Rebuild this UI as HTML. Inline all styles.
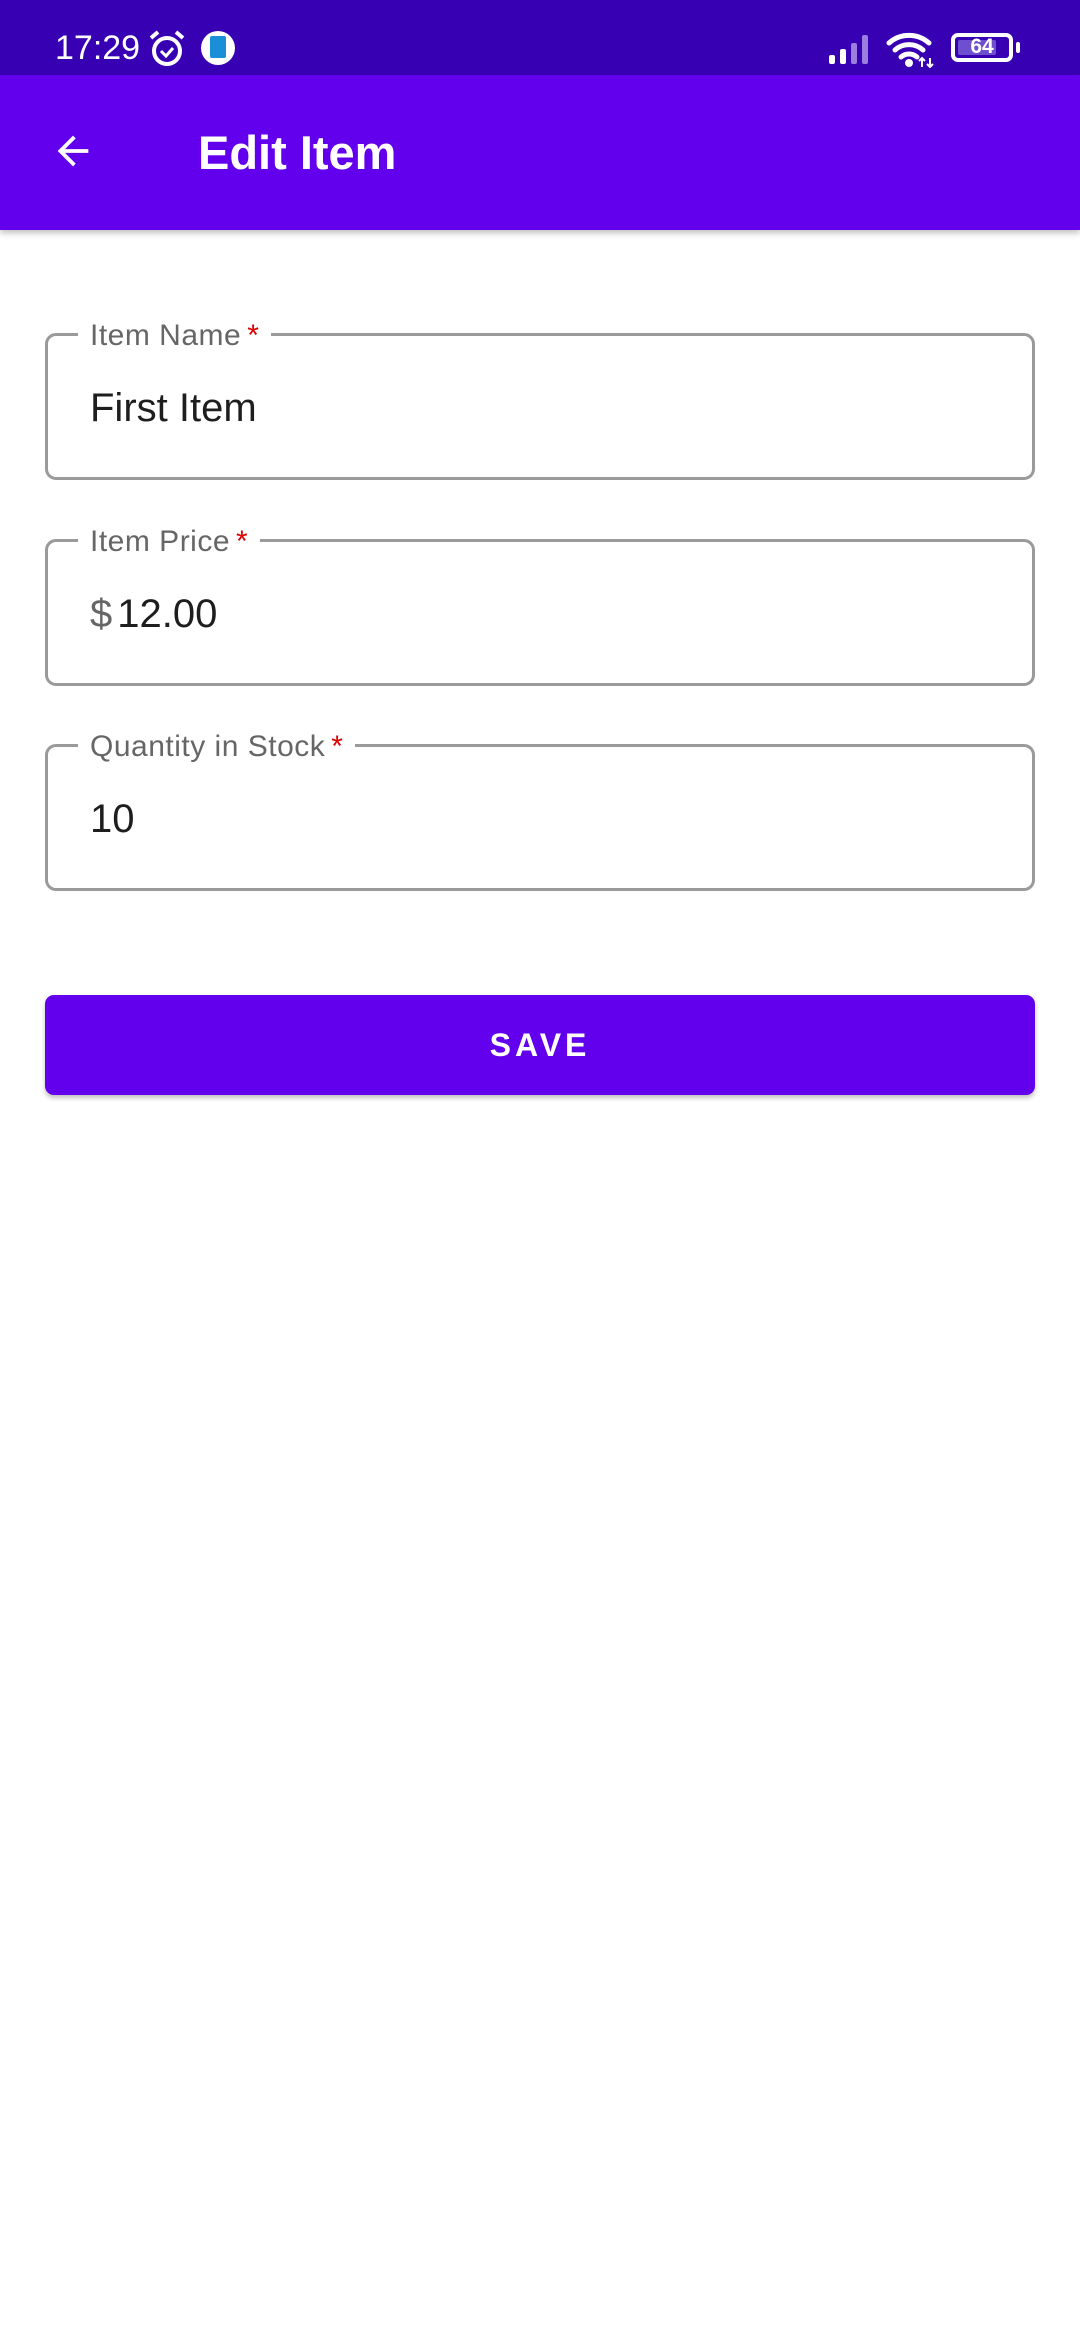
<!DOCTYPE html>
<html><head><meta charset="utf-8"><style>
*{margin:0;padding:0;box-sizing:border-box}
body{width:1080px;height:2340px;background:#fff;font-family:"Liberation Sans",Roboto,sans-serif;position:relative;overflow:hidden}
.sb{position:absolute;left:0;top:0;width:1080px;height:75px;background:#3700B3;color:#fff}
.ab{position:absolute;left:0;top:75px;width:1080px;height:155px;background:#6200EE;box-shadow:0 3px 6px rgba(0,0,0,.25)}
.title{position:absolute;left:198px;top:45px;font-size:47px;font-weight:bold;color:#fff;line-height:65px}
.field{position:absolute;left:45px;width:990px;height:147px;border:3px solid #9a9a9a;border-radius:11px}
.lab{position:absolute;left:30px;top:-20px;background:#fff;padding:0 12px;font-size:30px;color:#666;line-height:40px;letter-spacing:.5px}
.lab b{color:#d00;font-weight:normal;margin-left:6px}
.val{position:absolute;left:42px;top:47px;font-size:40px;color:#1e1e1e;line-height:50px}
.btn{position:absolute;left:45px;top:995px;width:990px;height:100px;background:#6200EE;border-radius:9px;box-shadow:0 3px 5px rgba(0,0,0,.25);color:#fff;font-size:32px;font-weight:bold;letter-spacing:4px;text-align:center;line-height:100px}
</style></head><body>
<div class="sb">
<div style="position:absolute;left:55px;top:28px;font-size:34px;line-height:40px">17:29</div>
<svg style="position:absolute;left:148px;top:29px" width="38" height="40" viewBox="0 0 38 40"><circle cx="19" cy="22" r="13" fill="none" stroke="#fff" stroke-width="4"/><path d="M13 22l5 5 7-8" fill="none" stroke="#fff" stroke-width="3"/><path d="M3 9l7-6M35 9l-7-6" stroke="#fff" stroke-width="4"/></svg>
<div style="position:absolute;left:201px;top:31px;width:34px;height:34px;border-radius:50%;background:#fff"><div style="position:absolute;left:9px;top:5px;width:16px;height:22px;background:#1a8fd8;border-radius:2px"></div></div>
<svg style="position:absolute;left:829px;top:33px" width="48" height="32" viewBox="0 0 48 32"><rect x="0" y="22" width="6" height="9" rx="2" fill="#fff"/><rect x="11" y="16" width="6" height="15" rx="2" fill="#fff"/><rect x="22" y="10" width="6" height="21" rx="2" fill="#9b7fe0"/><rect x="33" y="2" width="6" height="29" rx="2" fill="#9b7fe0"/></svg>
<svg style="position:absolute;left:886px;top:32px" width="52" height="36" viewBox="0 0 52 36"><path d="M3 11a30 30 0 0 1 40 0M9 18a21 21 0 0 1 28 0M15 25a12 12 0 0 1 16 0" fill="none" stroke="#fff" stroke-width="5" stroke-linecap="round"/><circle cx="23" cy="31" r="4" fill="#fff"/><path d="M36 26v9M44 26v9M33 29l3-3 3 3M41 32l3 3 3-3" stroke="#fff" stroke-width="2" fill="none"/></svg>
<div style="position:absolute;left:951px;top:33px;width:62px;height:29px;border:4px solid #fff;border-radius:7px"><div style="position:absolute;left:3px;top:3px;width:38px;height:15px;background:#6d4fd0;border-radius:2px"></div><div style="position:absolute;left:0;top:-3px;width:54px;text-align:center;font-size:21px;font-weight:bold;line-height:25px">64</div></div>
<div style="position:absolute;left:1016px;top:42px;width:4px;height:11px;background:#fff;border-radius:2px"></div>
</div>
<div class="ab">
<svg style="position:absolute;left:50px;top:53px" width="46" height="46" viewBox="0 0 24 24"><path d="M20 11H7.83l5.59-5.59L12 4l-8 8 8 8 1.41-1.41L7.83 13H20v-2z" fill="#fff"/></svg>
<div class="title">Edit Item</div>
</div>
<div class="field" style="top:333px"><div class="lab">Item Name<b>*</b></div><div class="val">First Item</div></div>
<div class="field" style="top:539px"><div class="lab">Item Price<b>*</b></div><div class="val"><span style="color:#666;margin-right:5px">$</span>12.00</div></div>
<div class="field" style="top:744px"><div class="lab">Quantity in Stock<b>*</b></div><div class="val">10</div></div>
<div class="btn">SAVE</div>
</body></html>
